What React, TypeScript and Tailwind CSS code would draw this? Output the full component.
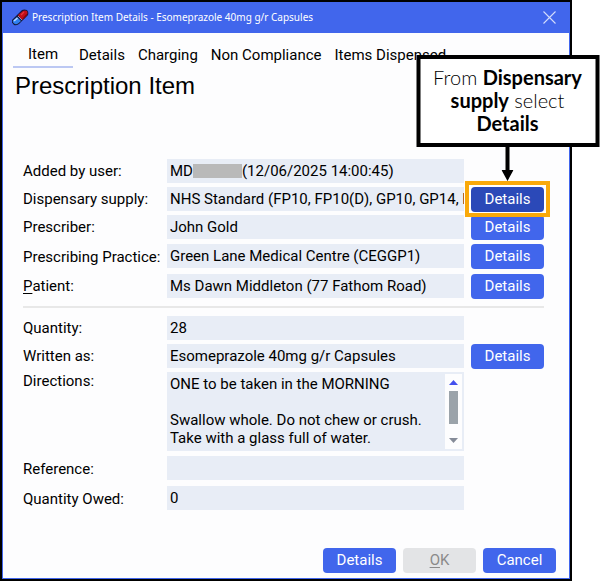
import React, { useState } from 'react';

const tabs = ['Item', 'Details', 'Charging', 'Non Compliance', 'Items Dispensed'];

const buttonClass =
  'h-[25px] w-[73px] shrink-0 rounded-[4px] pb-[2px] text-center text-[15px] leading-[22px]';

const fieldClass =
  'h-6 w-full min-w-0 bg-[#e8edf6] pl-[3px] text-[15px] leading-6 text-black outline-none';

const PillIcon: React.FC = () => (
  <svg width="17" height="17" viewBox="0 0 17 17" aria-hidden="true">
    <path d="M0 11 L10 1 Q12 0 15 1 Q17 3 16 6 L7 15 Q4 17 2 16 Q-1 13 0 11Z" fill="#15183a" />
    <path d="M6 6 L11 2 Q13 1 15 2 Q16 4 15 6 L10 11Z" fill="#c40d16" />
    <path d="M11 10 L15 5.5" stroke="#7d0710" strokeWidth="1.4" />
    <path d="M9 6 L12 3" stroke="#e03a3a" strokeWidth="1.2" />
    <path d="M5 8 L9 12 L6 14.5 Q4 16 2 14.5 Q0 13 1 11.5Z" fill="#2f7ff0" />
    <path d="M2 12 L5.5 9" stroke="#b9dcff" strokeWidth="1.6" />
    <path d="M6 7 L10 11" stroke="#8f8fb5" strokeWidth="1" />
  </svg>
);

const CloseIcon: React.FC = () => (
  <svg width="13" height="13" viewBox="0 0 13 13" aria-hidden="true">
    <path d="M0.5 0.5 L12.5 12.5 M12.5 0.5 L0.5 12.5" stroke="#d3dcfb" strokeWidth="1.1" />
  </svg>
);

const DetailsButton: React.FC<{ label: string }> = ({ label }) => (
  <button type="button" aria-label={label} className={`${buttonClass} bg-[#4166ec] text-white`}>
    Details
  </button>
);

interface RowProps {
  id: string;
  label: React.ReactNode;
  className: string;
  labelLeading?: string;
  children: React.ReactNode;
  action?: React.ReactNode;
}

const Row: React.FC<RowProps> = ({ id, label, className, labelLeading = 'leading-6', children, action }) => (
  <div className={`flex items-start ${className}`}>
    <label htmlFor={id} className={`w-36 shrink-0 whitespace-nowrap ${labelLeading}`}>
      {label}
    </label>
    <div className="min-w-0 flex-1">{children}</div>
    <div className="ml-[7px] w-[73px] shrink-0">{action}</div>
  </div>
);

const Callout: React.FC = () => (
  <>
    <div className="pointer-events-none absolute -inset-x-[6px] -top-[6px] -bottom-[5px] border-4 border-[#f9a90b]"></div>
    <div className="absolute bottom-[31px] left-1/2 flex -translate-x-1/2 flex-col items-center">
      <div className="w-[183px] border-4 border-black bg-white pt-[7px] pb-2 text-center font-['Century_Gothic',Lato,sans-serif] text-[20px] font-light leading-[23px] text-black">
        <div>
          From <strong className="font-bold">Dispensary</strong>
        </div>
        <div>
          <strong className="font-bold">supply</strong> select
        </div>
        <div>
          <strong className="font-bold">Details</strong>
        </div>
      </div>
      <svg width="12" height="34" viewBox="0 0 12 34" aria-hidden="true">
        <path d="M4 0 H8 V23 H12 L6 34 L0 23 H4Z" fill="#000" />
      </svg>
    </div>
  </>
);

export default function App() {
  const [activeTab, setActiveTab] = useState('Item');

  return (
    <div className="min-h-screen bg-white pr-[29px] font-[Roboto,sans-serif] text-[15px] text-black">
      <div className="flex min-h-screen flex-col border-2 border-black">
        {/* Title bar */}
        <header className="flex h-[31px] items-center bg-[#4166ec] pl-[10px] pr-[14px]">
          <PillIcon />
          <h1 className="ml-[3px] flex-1 whitespace-nowrap font-['Noto_Sans',sans-serif] text-[10px] text-white">
            Prescription Item Details - Esomeprazole 40mg g/r Capsules
          </h1>
          <button type="button" aria-label="Close">
            <CloseIcon />
          </button>
        </header>

        <main className="flex flex-1 flex-col border-x border-b border-[#4166ec] bg-[#fdfdfe] pb-[5px]">
          {/* Tabs */}
          <nav className="flex h-[35px] items-end whitespace-nowrap pl-[10px]">
            {tabs.map((tab) => (
              <button
                key={tab}
                type="button"
                onClick={() => setActiveTab(tab)}
                className={
                  tab === activeTab
                    ? 'h-[26px] w-[60px] border-b-2 border-[#bcc8f3] text-center leading-6'
                    : 'h-[26px] pl-[6px] pr-[7px] leading-6'
                }
              >
                {tab}
              </button>
            ))}
          </nav>

          <h2 className="mt-1 pl-[12px] font-['Liberation_Sans',Arial,sans-serif] text-2xl leading-[28px]">
            Prescription Item
          </h2>

          <form className="mt-[59px] pl-5 pr-[25px]">
            <Row id="added-by" label="Added by user:" className="h-7">
              <output id="added-by" className={`${fieldClass} flex items-center`}>
                MD<span className="h-[14px] w-[49px] bg-[#b9b9b9]"></span>(12/06/2025 14:00:45)
              </output>
            </Row>
            <Row
              id="supply"
              label="Dispensary supply:"
              className="h-7"
              action={
                <div className="relative z-10 flex">
                  <div className="absolute -inset-x-[6px] -top-[6px] -bottom-[5px] bg-white"></div>
                  <button type="button" className={`${buttonClass} relative bg-[#2b49b8] text-white`}>
                    Details
                  </button>
                  <Callout />
                </div>
              }
            >
              <input
                id="supply"
                readOnly
                className={fieldClass}
                defaultValue="NHS Standard (FP10, FP10(D), GP10, GP14, HBP)"
              />
            </Row>
            <Row
              id="prescriber"
              label="Prescriber:"
              className="h-7"
              action={<DetailsButton label="Prescriber details" />}
            >
              <input id="prescriber" readOnly className={fieldClass} defaultValue="John Gold" />
            </Row>
            <div className="pt-px">
              <Row
                id="practice"
                label="Prescribing Practice:"
                className="h-[30px]"
                labelLeading="leading-[26px]"
                action={<DetailsButton label="Practice details" />}
              >
                <input
                  id="practice"
                  readOnly
                  className={fieldClass}
                  defaultValue="Green Lane Medical Centre (CEGGP1)"
                />
              </Row>
              <Row
                id="patient"
                label={<><span className="underline underline-offset-2">P</span>atient:</>}
                className="h-[30px]"
                action={<DetailsButton label="Patient details" />}
              >
                <input
                  id="patient"
                  readOnly
                  className={fieldClass}
                  defaultValue="Ms Dawn Middleton (77 Fathom Road)"
                />
              </Row>
            </div>

            <hr className="mt-[2px] mb-2 border-t-2 border-[#e8e8e8]" />

            <Row id="quantity" label="Quantity:" className="h-7">
              <input id="quantity" className={fieldClass} defaultValue="28" />
            </Row>
            <Row
              id="written-as"
              label="Written as:"
              className="h-7"
              action={<DetailsButton label="Written as details" />}
            >
              <input
                id="written-as"
                className={fieldClass}
                defaultValue="Esomeprazole 40mg g/r Capsules"
              />
            </Row>
            <Row id="directions" label="Directions:" className="h-[84px]" labelLeading="leading-[18px]">
              <div className="flex h-[79px] bg-[#e8edf6] p-[2px]">
                <textarea
                  id="directions"
                  className="min-w-0 flex-1 resize-none overflow-hidden bg-transparent pt-px pl-px leading-[18px] outline-none"
                  defaultValue={
                    'ONE to be taken in the MORNING\n\nSwallow whole. Do not chew or crush.\nTake with a glass full of water.'
                  }
                />
                {/* Scroll bar */}
                <div className="flex w-[17px] flex-col items-center bg-[#fdfdfe] py-[6px]">
                  <svg width="9" height="5" viewBox="0 0 9 5" aria-hidden="true">
                    <path d="M4.5 0 L9 5 H0Z" fill="#4450ee" />
                  </svg>
                  <div className="mt-[6px] mb-auto h-[33px] w-[9px] bg-[#9ba3aa]"></div>
                  <svg width="9" height="5" viewBox="0 0 9 5" aria-hidden="true">
                    <path d="M0 0 H9 L4.5 5Z" fill="#858b98" />
                  </svg>
                </div>
              </div>
            </Row>
            <Row id="reference" label="Reference:" className="h-[30px]" labelLeading="leading-[26px]">
              <input id="reference" className={fieldClass} defaultValue="" />
            </Row>
            <Row id="owed" label="Quantity Owed:" className="h-[30px]" labelLeading="leading-[26px]">
              <input id="owed" className={fieldClass} defaultValue="0" />
            </Row>
          </form>

          <footer className="mt-auto flex justify-end gap-[7px] pr-[13px]">
            <DetailsButton label="Item details" />
            <button type="button" disabled className={`${buttonClass} bg-[#e3e4e6] text-[#8a8a8a]`}>
              <span className="underline underline-offset-2">O</span>K
            </button>
            <button type="button" className={`${buttonClass} bg-[#4166ec] text-white`}>
              Cancel
            </button>
          </footer>
        </main>
      </div>
    </div>
  );
}
